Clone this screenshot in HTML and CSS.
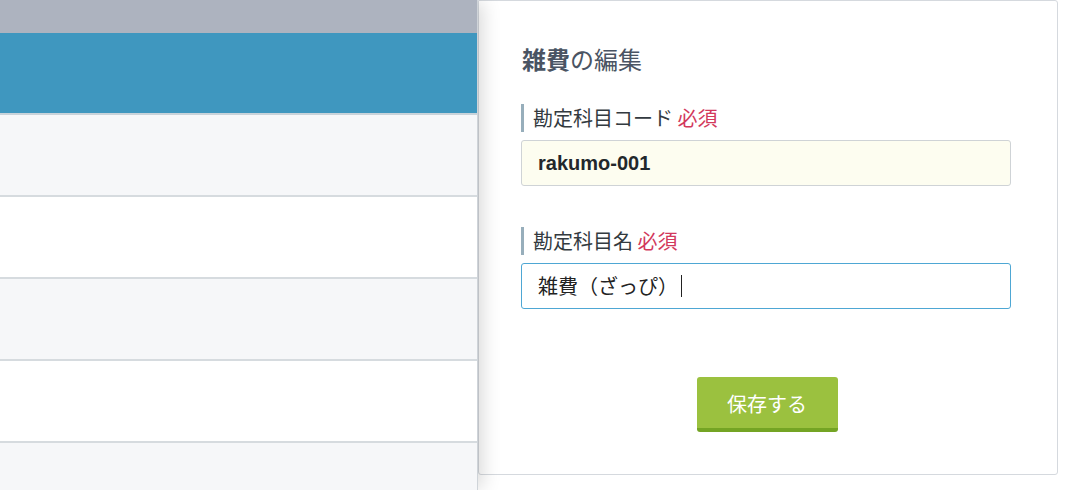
FILE: index.html
```html
<!DOCTYPE html>
<html lang="ja">
<head>
<meta charset="utf-8">
<title>雑費の編集</title>
<link rel="stylesheet" href="styles.css">
</head>
<body>
<div class="list">
  <div class="list-head"></div>
  <div class="row row-selected"></div>
  <div class="row row-alt"></div>
  <div class="row"></div>
  <div class="row row-alt"></div>
  <div class="row"></div>
  <div class="row row-alt"></div>
</div>
<div class="editor">
  <h1 class="title"><b>雑費</b>の編集</h1>
  <div class="field">
    <div class="label">勘定科目コード <span class="req">必須</span></div>
    <div class="input input-readonly"><span class="code">rakumo-001</span></div>
  </div>
  <div class="field">
    <div class="label">勘定科目名 <span class="req">必須</span></div>
    <div class="input input-focus">雑費（ざっぴ）<span class="caret"></span></div>
  </div>
  <div class="actions">
    <button class="btn-save">保存する</button>
  </div>
</div>
</body>
</html>
```

FILE: styles.css
```css
html, body {
  margin: 0;
  padding: 0;
  background: #ffffff;
}
body {
  display: flex;
  align-items: flex-start;
  height: 490px;
  overflow: hidden;
  font-family: "Noto Sans CJK JP", "Noto Sans", sans-serif;
}
.list {
  position: relative;
  z-index: 2;
  width: 477px;
  height: 490px;
  flex: none;
  overflow: hidden;
  border-right: 1px solid #cfd4d9;
  box-shadow: 6px 0 18px -2px rgba(0, 0, 0, 0.16);
  background: #ffffff;
  display: flex;
  flex-direction: column;
}
.list-head {
  height: 33px;
  flex: none;
  background: #adb3bf;
}
.row {
  height: 80px;
  flex: none;
  border-bottom: 2px solid #d6dbdf;
  background: #ffffff;
}
.row-alt {
  background: #f6f7f9;
}
.row-selected {
  background: #3f97bf;
  border-bottom-color: #c9d3da;
}
.editor {
  position: relative;
  z-index: 1;
  width: 490px;
  height: 430px;
  flex: none;
  padding: 43px 46px 0 42px;
  border: 1px solid #d5d9de;
  border-radius: 0 3px 3px 3px;
  background: #ffffff;
}
.title {
  margin: 0 0 0 1px;
  font-size: 24px;
  line-height: 30px;
  font-weight: 400;
  color: #4a5463;
}
.title b {
  font-weight: 700;
}
.field {
  margin-top: 30px;
}
.field + .field {
  margin-top: 41px;
}
.label {
  border-left: 3px solid #97aebb;
  padding-left: 9px;
  font-size: 20px;
  line-height: 28px;
  color: #333a40;
}
.req {
  color: #d2395c;
}
.input {
  margin-top: 8px;
  height: 44px;
  padding: 0 16px;
  border: 1px solid #cfd3d6;
  border-radius: 3px;
  font-size: 20px;
  line-height: 44px;
  color: #222;
  display: flex;
  align-items: center;
}
.input-readonly {
  background: #fdfdf0;
}
.code {
  font-family: "Liberation Sans", Arial, sans-serif;
  font-weight: 700;
  font-size: 20px;
  color: #22272b;
}
.input-focus {
  border-color: #4ea7d4;
  background: #ffffff;
}
.caret {
  display: inline-block;
  width: 1px;
  height: 22px;
  margin-left: 3px;
  background: #222;
}
.actions {
  display: flex;
  justify-content: center;
  margin-top: 68px;
  padding-left: 2px;
}
.btn-save {
  width: 141px;
  height: 55px;
  border: none;
  border-bottom: 4px solid #74a424;
  border-radius: 3px;
  background: #9bc13f;
  color: #ffffff;
  font-family: "Noto Sans CJK JP", "Noto Sans", sans-serif;
  font-size: 20px;
  padding: 2px 0 0;
}
```
